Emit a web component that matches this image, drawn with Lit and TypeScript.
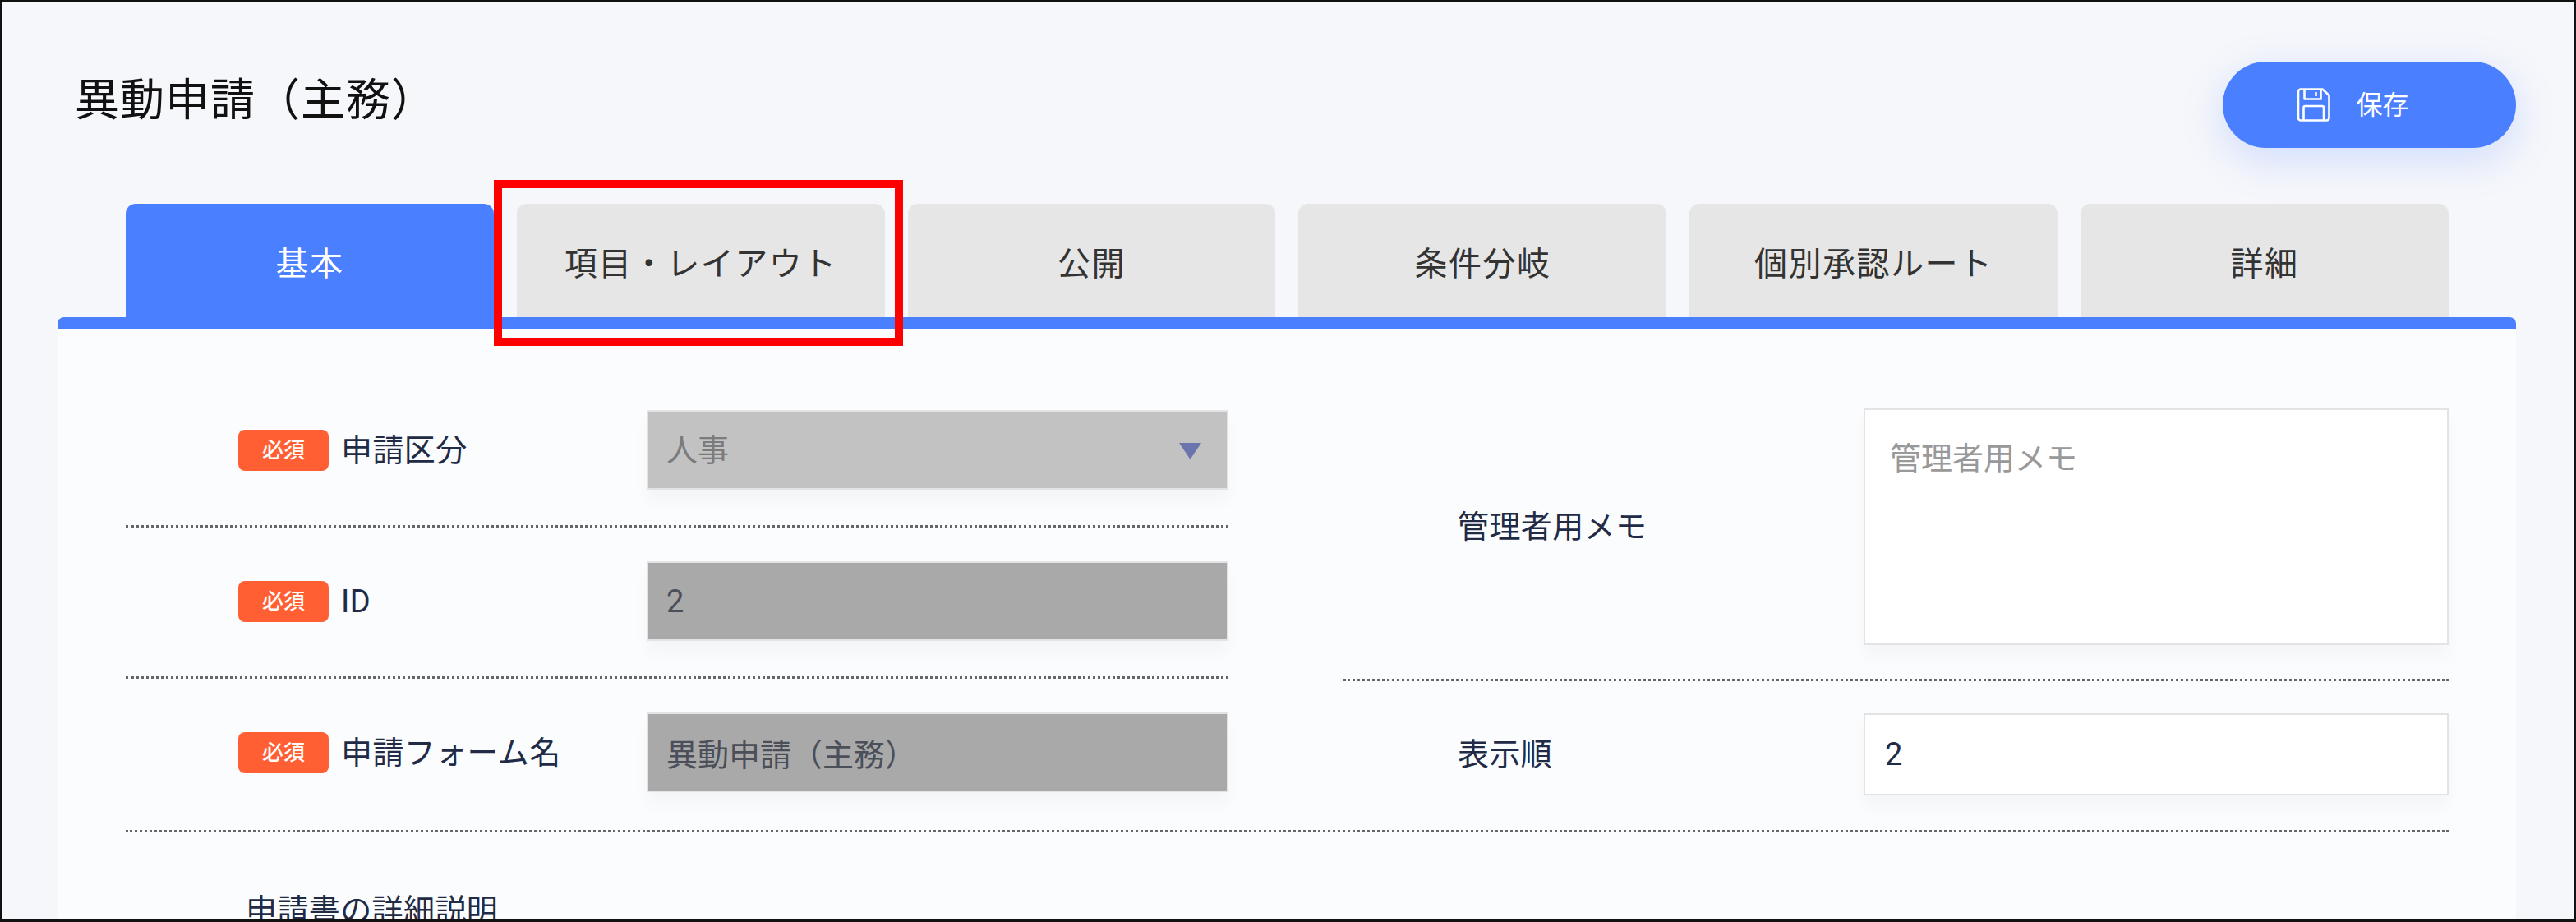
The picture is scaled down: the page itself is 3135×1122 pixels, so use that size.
import { LitElement, html, css } from "lit";
import { customElement } from "lit/decorators.js";

const TABS = ["基本", "項目・レイアウト", "公開", "条件分岐", "個別承認ルート", "詳細"];

@customElement("app-root")
export class AppRoot extends LitElement {
  static styles = css`
    :host {
      display: block;
      position: relative;
      box-sizing: border-box;
      width: 3135px;
      height: 1122px;
      overflow: hidden;
      border: 3px solid #111;
      border-bottom-width: 4px;
      background: #f6f7fb;
      font-family: Roboto, "Noto Sans CJK JP", sans-serif;
      color: #222b45;
    }
    .header {
      display: flex;
      justify-content: space-between;
      align-items: center;
      height: 105px;
      padding: 72px 70px 0 88px;
    }
    h1 {
      margin: 0;
      font-size: 54px;
      font-weight: 400;
      line-height: 1;
      letter-spacing: 1px;
      color: #111;
      position: relative;
      top: -5px;
    }
    .save {
      display: flex;
      align-items: center;
      justify-content: center;
      gap: 31px;
      width: 357px;
      height: 105px;
      padding: 0 40px 0 0;
      border: 0;
      border-radius: 53px;
      background: #4a80ff;
      color: #fff;
      font: inherit;
      font-size: 32px;
      box-shadow: 0 14px 50px rgba(74, 128, 255, 0.22);
    }
    .save span {
      padding-bottom: 6px;
    }
    .save svg {
      width: 41px;
      height: 41px;
      display: block;
    }
    .tabs {
      display: flex;
      gap: 28px;
      margin: 68px 152px 0 150px;
      height: 138px;
    }
    .tab {
      flex: 1;
      display: flex;
      align-items: center;
      justify-content: center;
      border-radius: 12px 12px 0 0;
      background: #e6e6e6;
      color: #333;
      font-size: 40px;
      padding-top: 2px;
      letter-spacing: 1.5px;
    }
    .tab.active {
      background: #4a80ff;
      color: #fff;
    }
    .card {
      margin: 0 70px 0 67px;
      border-top: 14px solid #4a80ff;
      border-radius: 8px 8px 0 0;
      background: #fbfcfe;
      padding: 97px 82px 0 83px;
      height: 800px;
      box-sizing: border-box;
    }
    .grid {
      display: grid;
      grid-template-columns: 1342px 1345px;
      justify-content: space-between;
      border-bottom: 3px dotted #666;
    }
    .row {
      display: flex;
      align-items: center;
      box-sizing: border-box;
      padding: 2px 0 43px;
    }
    .row + .row {
      padding-top: 41px;
    }
    .row:last-child {
      padding-bottom: 46px;
    }
    .row.div {
      border-bottom: 3px dotted #666;
    }
    .left .row {
      padding-left: 137px;
    }
    .right .row {
      padding-left: 139px;
    }
    .right .row:first-child {
      padding-top: 0;
      padding-bottom: 41px;
    }
    .right .row + .row {
      padding-top: 39px;
      padding-bottom: 42px;
    }
    .label {
      width: 497px;
      display: flex;
      align-items: center;
      gap: 15px;
      font-size: 38px;
      letter-spacing: 0.4px;
      line-height: 50px;
      white-space: nowrap;
    }
    .right .label {
      width: 494px;
    }
    .badge {
      width: 110px;
      height: 50px;
      border-radius: 8px;
      background: #ff5f32;
      color: #fff;
      font-size: 26px;
      font-weight: 500;
      letter-spacing: 0;
      line-height: 50px;
      text-align: center;
    }
    .ctl {
      box-sizing: border-box;
      display: block;
      flex: 1;
      min-width: 0;
      width: 100%;
      height: 97px;
      margin: 0;
      padding: 0 22px;
      border: 2px solid #e3e3e5;
      border-radius: 0;
      background: #fff;
      color: #222b45;
      font: inherit;
      font-size: 38px;
      box-shadow: 0 14px 20px rgba(0, 0, 0, 0.03);
      outline: none;
      resize: none;
    }
    .ctl.ro {
      background: #a9a9a9;
      color: #4b4f5a;
      opacity: 1;
    }
    .ctl.sel {
      appearance: none;
      background: #c2c2c2;
      color: #7c7c7c;
      opacity: 1;
    }
    .selwrap {
      flex: 1;
      position: relative;
      display: flex;
    }
    .arrow {
      position: absolute;
      right: 33px;
      top: 40px;
      width: 27px;
      height: 20px;
      background: #6b75ad;
      clip-path: polygon(0 0, 100% 0, 50% 100%);
    }
    textarea.ctl {
      height: 288px;
      padding: 34px 30px;
      line-height: 50px;
    }
    .ctl.num {
      height: 100px;
      padding: 0 24px;
    }
    .ctl::placeholder {
      color: #999;
      opacity: 1;
    }
    .desc {
      margin: 70px 0 0 146px;
      font-size: 38px;
      letter-spacing: 0.4px;
      line-height: 50px;
    }
    .mark {
      position: absolute;
      left: 598px;
      top: 216px;
      width: 498px;
      height: 202px;
      box-sizing: border-box;
      border: 10px solid #f00;
      pointer-events: none;
    }
  `;

  private labelled(text: string) {
    return html`<div class="label"><span class="badge">必須</span><span>${text}</span></div>`;
  }

  render() {
    return html`
      <header class="header">
        <h1>異動申請（主務）</h1>
        <button class="save">
          <svg viewBox="0 0 41 41" fill="none" stroke="#fff" stroke-width="2.6" stroke-linejoin="round">
            <path d="M5 1.5H31.5L39.5 9V36.5A3 3 0 0 1 36.5 39.5H5A3 3 0 0 1 2 36.5V4.5A3 3 0 0 1 5 1.5Z" />
            <path d="M9.5 1.5V13.5H29.5V1.5" />
            <path d="M23.5 5V10" />
            <path d="M8.5 39.5V24A2 2 0 0 1 10.5 22H31A2 2 0 0 1 33 24V39.5" />
          </svg>
          <span>保存</span>
        </button>
      </header>
      <nav class="tabs">
        ${TABS.map((t, i) => html`<div class="tab ${i === 0 ? "active" : ""}">${t}</div>`)}
      </nav>
      <section class="card">
        <div class="grid">
          <div class="left">
            <div class="row div">
              ${this.labelled("申請区分")}
              <div class="selwrap">
                <select class="ctl sel" disabled><option>人事</option></select>
                <span class="arrow"></span>
              </div>
            </div>
            <div class="row div">
              ${this.labelled("ID")}
              <input class="ctl ro" disabled value="2" />
            </div>
            <div class="row">
              ${this.labelled("申請フォーム名")}
              <input class="ctl ro" disabled value="異動申請（主務）" />
            </div>
          </div>
          <div class="right">
            <div class="row div">
              <div class="label">管理者用メモ</div>
              <textarea class="ctl" placeholder="管理者用メモ"></textarea>
            </div>
            <div class="row">
              <div class="label">表示順</div>
              <input class="ctl num" value="2" />
            </div>
          </div>
        </div>
        <div class="desc">申請書の詳細説明</div>
      </section>
      <div class="mark"></div>
    `;
  }
}
